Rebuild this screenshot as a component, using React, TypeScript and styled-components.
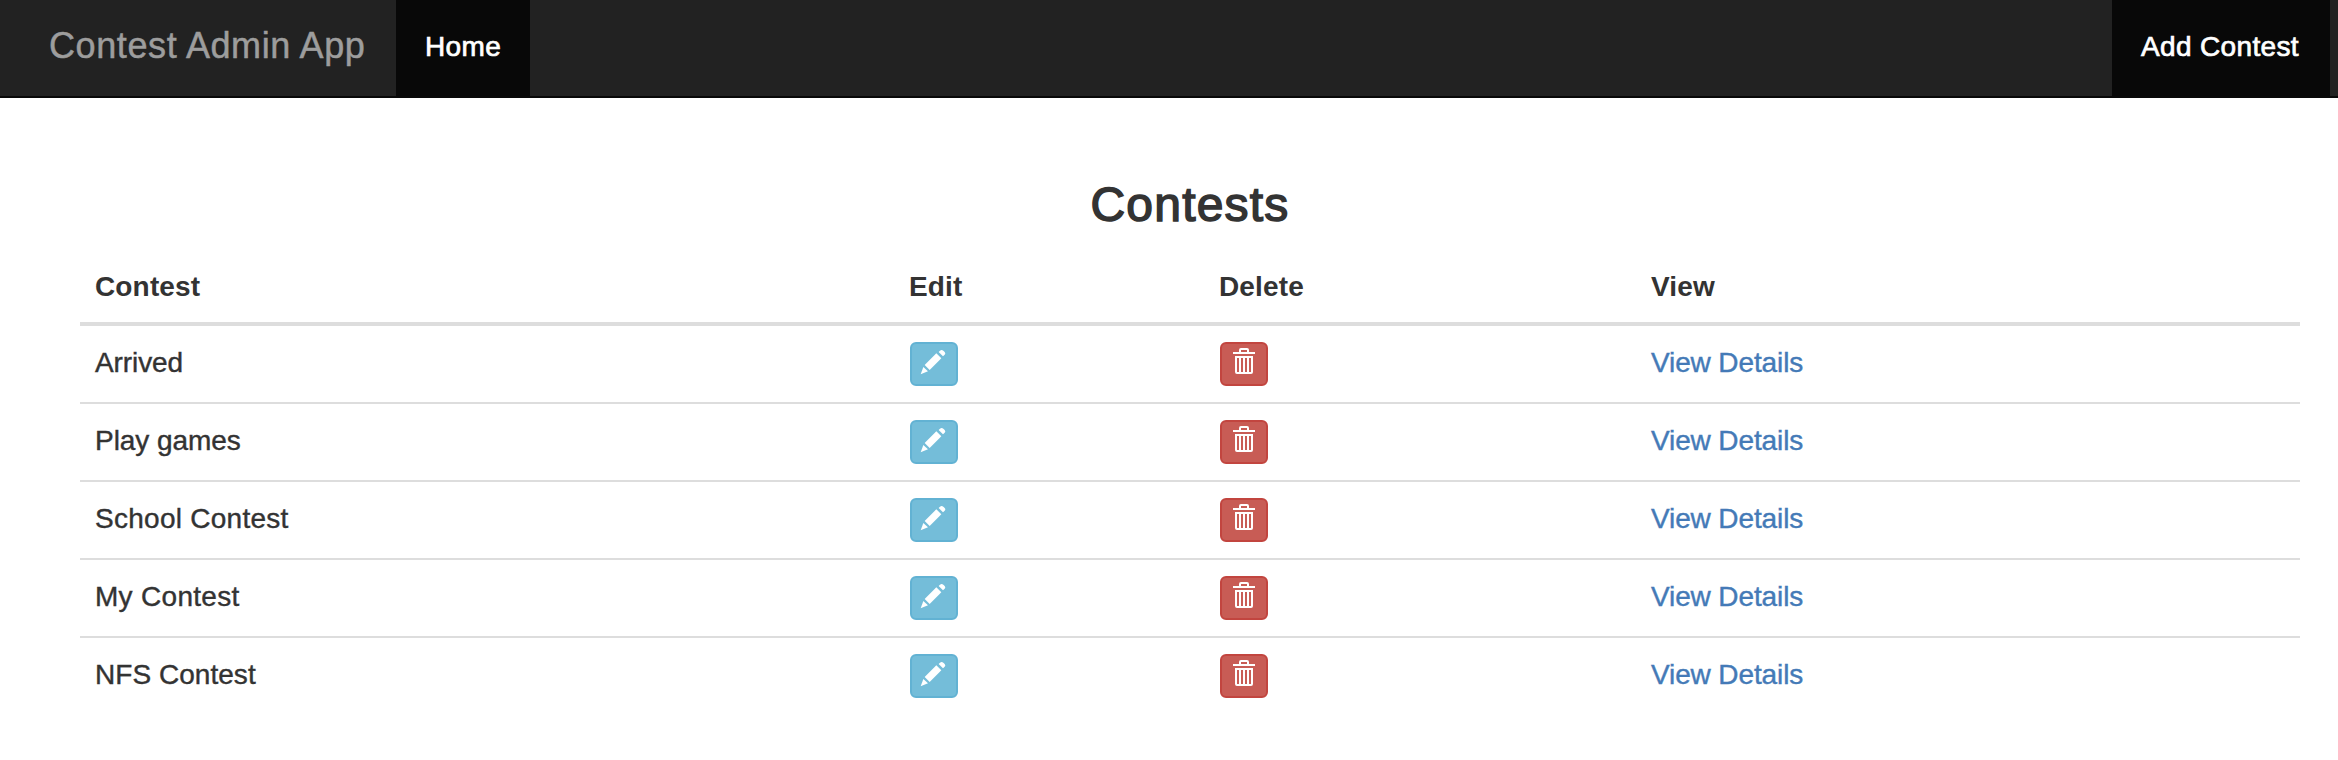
import React from "react";
import styled, { createGlobalStyle } from "styled-components";

const GlobalStyle = createGlobalStyle`
  *, *::before, *::after { box-sizing: border-box; }
  body {
    margin: 0;
    background: #fff;
    color: #333;
    font-family: "Liberation Sans", Arial, sans-serif;
    font-size: 28px;
    line-height: 42px;
  }
`;

const Navbar = styled.nav`
  display: flex;
  height: 98px;
  padding-right: 8px;
  background: #222;
  border-bottom: 2px solid #080808;
`;

const Brand = styled.a`
  width: 396px;
  padding: 25px 0 0 49px;
  color: #9d9d9d;
  font-size: 36px;
  letter-spacing: 0.6px;
  white-space: nowrap;
  text-decoration: none;
  -webkit-text-stroke: 0.5px currentColor;
`;

const NavItem = styled.a<{ $width: number; $end?: boolean }>`
  width: ${(p) => p.$width}px;
  height: 98px;
  margin-left: ${(p) => (p.$end ? "auto" : "0")};
  padding: 26px 0 0 29px;
  background: #080808;
  color: #fff;
  letter-spacing: 0.35px;
  white-space: nowrap;
  text-decoration: none;
  -webkit-text-stroke: 0.7px currentColor;
`;

const Main = styled.main`
  padding: 80px 38px 0 80px;
`;

const Title = styled.h2`
  margin: 0 0 19px;
  color: #333;
  font-size: 48px;
  font-weight: 400;
  line-height: 54px;
  height: 53px;
  text-align: center;
  letter-spacing: 1.2px;
  -webkit-text-stroke: 1.5px currentColor;
`;

const Table = styled.table`
  width: 100%;
  table-layout: fixed;
  border-collapse: separate;
  border-spacing: 0;
`;

const HeadCell = styled.th<{ $width?: number }>`
  width: ${(p) => (p.$width ? `${p.$width}px` : "auto")};
  height: 76px;
  padding: 16px 16px 14px ${(p) => (p.$width ? 15 : 16)}px;
  border-bottom: 4px solid #ddd;
  text-align: left;
  letter-spacing: 0.15px;
  vertical-align: top;
`;

const Row = styled.tr`
  & + & > td { border-top: 2px solid #ddd; }
`;

const Cell = styled.td`
  padding: 16px;
  vertical-align: top;
`;

const NameCell = styled(Cell)<{ $tracking: number }>`
  padding-left: 15px;
  letter-spacing: ${(p) => p.$tracking}px;
  -webkit-text-stroke: 0.4px currentColor;
`;

const IconButton = styled.button<{ $tone: "info" | "danger" }>`
  display: block;
  width: 48px;
  height: 44px;
  padding: 0;
  border: 2px solid ${(p) => (p.$tone === "info" ? "#62b2d3" : "#c2453f")};
  border-radius: 6px;
  background: ${(p) => (p.$tone === "info" ? "#74bdd9" : "#c85c55")};
  color: #fff;

  svg { display: block; margin: -2px; }
`;

const DetailsLink = styled.a`
  color: #447ab7;
  letter-spacing: -0.12px;
  text-decoration: none;
  -webkit-text-stroke: 0.4px currentColor;
`;

const PencilIcon = () => (
  <svg width="48" height="44" viewBox="0 0 144 132" fill="currentColor">
    <path d="M86 30L90 26Q95 22 100 26L104 30Q108 35 104 38L99 43Z" />
    <path d="M79 34L94 49L59 84L44 69Z" />
    <path d="M40 75L54 88L32 97Z" />
  </svg>
);

const TrashIcon = () => (
  <svg width="48" height="44" viewBox="0 0 144 132" fill="none" stroke="currentColor">
    <path d="M39 33H105" strokeWidth="6" />
    <path d="M60 32V24Q60 21 63 21H81Q84 21 84 24V32" strokeWidth="6" />
    <path d="M48 45H96V90Q96 93 93 93H51Q48 93 48 90Z" strokeWidth="6" />
    <path d="M60 45V93M72 45V93M84 45V93" strokeWidth="6" />
  </svg>
);

const contests = [
  { name: "Arrived", tracking: -0.1 },
  { name: "Play games", tracking: -0.05 },
  { name: "School Contest", tracking: 0.27 },
  { name: "My Contest", tracking: 0.3 },
  { name: "NFS Contest", tracking: 0.04 },
];

export default function App() {
  return (
    <>
      <GlobalStyle />
      <Navbar>
        <Brand>Contest Admin App</Brand>
        <NavItem $width={134}>Home</NavItem>
        <NavItem $width={218} $end>Add Contest</NavItem>
      </Navbar>
      <Main>
        <Title>Contests</Title>
        <Table>
          <thead>
            <tr>
              <HeadCell $width={814}>Contest</HeadCell>
              <HeadCell $width={310}>Edit</HeadCell>
              <HeadCell $width={431}>Delete</HeadCell>
              <HeadCell>View</HeadCell>
            </tr>
          </thead>
          <tbody>
            {contests.map(({ name, tracking }) => (
              <Row key={name}>
                <NameCell $tracking={tracking}>{name}</NameCell>
                <Cell>
                  <IconButton $tone="info" aria-label="Edit"><PencilIcon /></IconButton>
                </Cell>
                <Cell>
                  <IconButton $tone="danger" aria-label="Delete"><TrashIcon /></IconButton>
                </Cell>
                <Cell><DetailsLink>View Details</DetailsLink></Cell>
              </Row>
            ))}
          </tbody>
        </Table>
      </Main>
    </>
  );
}
